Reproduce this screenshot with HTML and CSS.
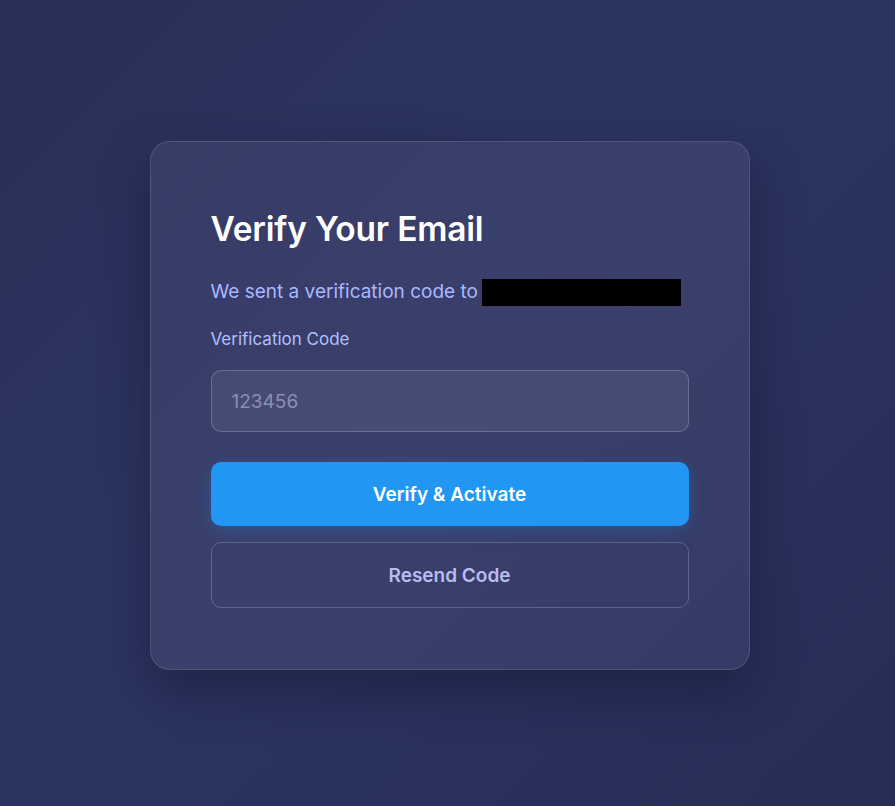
FILE: index.html
```html
<!DOCTYPE html>
<html lang="en">
<head>
    <meta charset="UTF-8">
    <meta name="viewport" content="width=device-width, initial-scale=1.0">
    <title>Verify Your Email</title>
    <link rel="stylesheet" href="styles.css">
</head>
<body>
    <main class="page">
        <div class="verify-card">
            <h1>Verify Your Email</h1>
            <p class="sent-to">We sent a verification code to <span class="email-mask"></span></p>
            <form id="verifyForm" class="verify-form">
                <label for="code">Verification Code</label>
                <input type="text" id="code" name="code" placeholder="123456" maxlength="6">
                <button type="submit" class="btn-primary">Verify &amp; Activate</button>
                <button type="button" class="btn-outline">Resend Code</button>
            </form>
        </div>
    </main>
</body>
</html>
```

FILE: styles.css
```css
body, html {
    margin: 0;
    padding: 0;
    height: 100%;
    font-family: 'Inter', 'Noto Sans', sans-serif;
}
body {
    background: linear-gradient(135deg, #283058 0%, #2c3462 45%, #262d56 100%);
}
.page {
    min-height: 100%;
    display: flex;
    justify-content: center;
    padding: 141px 0 0 4px;
    box-sizing: border-box;
}
.verify-card {
    width: 600px;
    height: 529px;
    box-sizing: border-box;
    padding: 60px;
    border: 1px solid rgba(255, 255, 255, 0.12);
    border-radius: 20px;
    background: linear-gradient(135deg, #363c66 0%, #3a3f6c 50%, #353b66 100%);
    box-shadow: 0 20px 50px rgba(15, 18, 40, 0.45);
}
h1 {
    margin: 7px 0 0;
    color: #ffffff;
    font-size: 33.5px;
    font-weight: 600;
    letter-spacing: -0.2px;
    line-height: 40px;
}
.sent-to {
    margin: 29px 0 0;
    color: #a8b8ff;
    font-size: 19px;
    line-height: 28px;
    display: flex;
    align-items: center;
}
.email-mask {
    display: inline-block;
    width: 199px;
    height: 27px;
    margin-left: 4px;
    background: #000;
}
.verify-form {
    display: flex;
    flex-direction: column;
    margin-top: 21px;
}
label {
    color: #b3c0ff;
    font-size: 17px;
    line-height: 24px;
    margin-bottom: 19px;
}
input {
    height: 62px;
    box-sizing: border-box;
    padding: 0 20px;
    border: 1px solid rgba(255, 255, 255, 0.2);
    border-radius: 10px;
    background: rgba(255, 255, 255, 0.07);
    color: #fff;
    font-family: inherit;
    font-size: 19px;
    outline: none;
}
input::placeholder {
    color: #8a8fb3;
}
button {
    height: 64px;
    border-radius: 10px;
    font-family: inherit;
    font-size: 19px;
    font-weight: 600;
    cursor: pointer;
}
.btn-primary {
    margin-top: 30px;
    border: none;
    background: #2196f3;
    color: #fff;
    box-shadow: 0 4px 18px rgba(33, 150, 243, 0.25);
}
.btn-outline {
    margin-top: 16px;
    height: 66px;
    border: 1px solid rgba(255, 255, 255, 0.2);
    background: transparent;
    color: #b7bdf0;
}
```
